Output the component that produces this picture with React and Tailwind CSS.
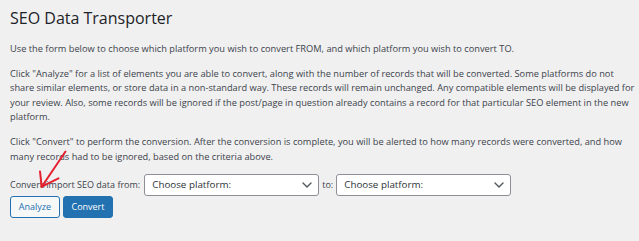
import React from 'react'

const FONT = { fontFamily: '"Open Sans", "Noto Sans", Arial, sans-serif' }

function PlatformSelect() {
  return (
    <div className="w-[175px] h-[22px] flex items-center justify-between bg-white border border-[#8c8f94] rounded-[3px] pl-[7px] pr-[6px] text-[9.8px] text-[#2c3338]">
      <span>Choose platform:</span>
      <svg width="10" height="6" viewBox="0 0 10 6" fill="none">
        <path d="M1 1l4 4 4-4" stroke="#50575e" strokeWidth="1.4" strokeLinecap="round" strokeLinejoin="round" />
      </svg>
    </div>
  )
}

export default function App() {
  return (
    <div className="relative w-[639px] h-[241px] bg-[#f0f0f1] overflow-hidden" style={FONT}>
      <div className="px-[10px] text-[#3c434a] text-[9.25px] leading-[14.6px]">
        <h1 className="pt-[7px] pb-[3px] text-[16px] leading-[22px] font-normal text-[#1d2327]">
          SEO Data Transporter
        </h1>

        <p className="mt-[10px]">
          Use the form below to choose which platform you wish to convert FROM, and which platform you wish to convert TO.
        </p>

        <p className="mt-[10px] whitespace-nowrap">
          Click "Analyze" for a list of elements you are able to convert, along with the number of records that will be converted. Some platforms do not<br />
          share similar elements, or store data in a non-standard way. These records will remain unchanged. Any compatible elements will be displayed for<br />
          your review. Also, some records will be ignored if the post/page in question already contains a record for that particular SEO element in the new<br />
          platform.
        </p>

        <p className="mt-[10px] whitespace-nowrap">
          Click "Convert" to perform the conversion. After the conversion is complete, you will be alerted to how many records were converted, and how<br />
          many records had to be ignored, based on the criteria above.
        </p>

        {/* form row */}
        <div className="mt-[10px] flex items-center">
          <span className="mr-[4px] text-[9px]">Convert/import SEO data from:</span>
          <PlatformSelect />
          <span className="mx-[3px] text-[9px]">to:</span>
          <PlatformSelect />
        </div>

        <div className="flex gap-[3px]">
          <button className="w-[50px] h-[22px] rounded-[3px] border border-[#2271b1] bg-[#f6f7f7] text-[#2271b1] text-[9px]">
            Analyze
          </button>
          <button className="w-[50px] h-[22px] rounded-[3px] border border-[#2271b1] bg-[#2271b1] text-white text-[9px]">
            Convert
          </button>
        </div>
      </div>

      {/* red annotation arrow */}
      <svg className="absolute left-0 top-0 pointer-events-none" width="639" height="241">
        <g stroke="#e5202e" strokeWidth="2" strokeLinecap="round" fill="none">
          <path d="M65.5 151.5 L41.7 186.7" />
          <path d="M41.7 186.7 L40 171.5" />
          <path d="M41.7 186.7 L58.5 178.3" />
        </g>
      </svg>
    </div>
  )
}
